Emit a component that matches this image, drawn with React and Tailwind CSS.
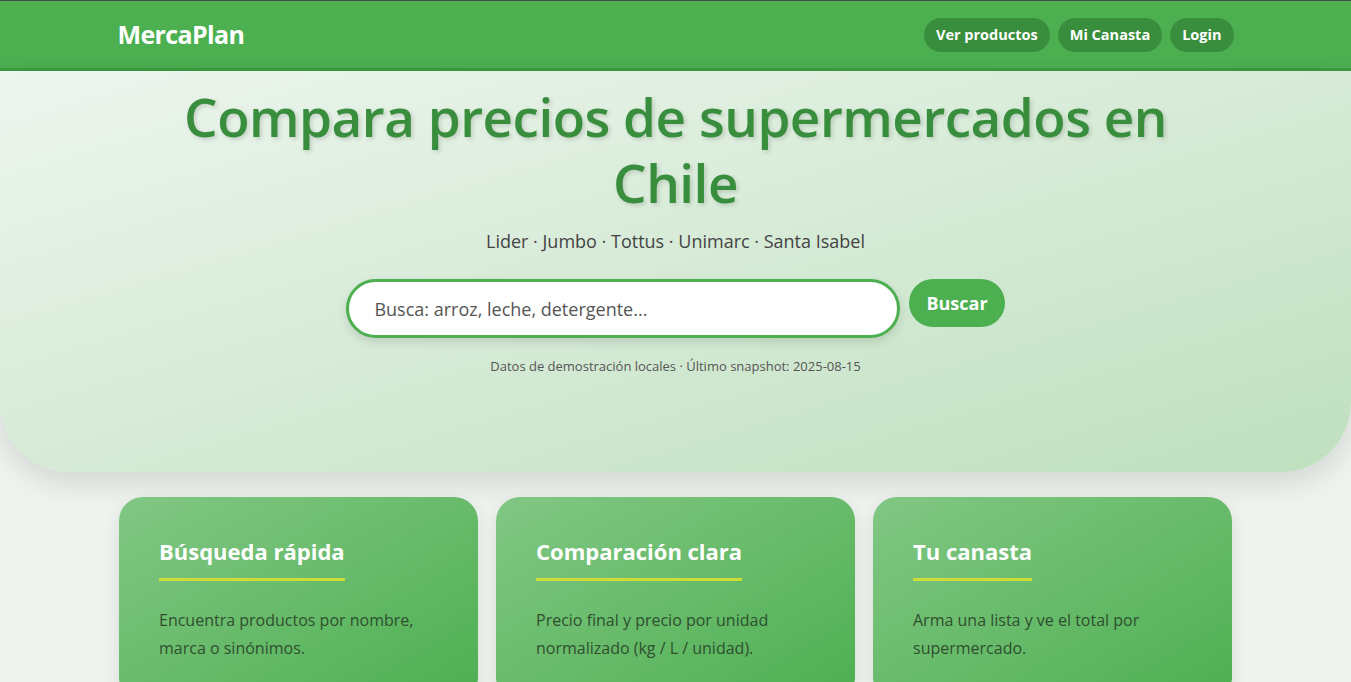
import { useState } from "react";

/* Tarjetas de características */
const features = [
  { title: "Búsqueda rápida", text: "Encuentra productos por nombre, marca o sinónimos." },
  { title: "Comparación clara", text: "Precio final y precio por unidad normalizado (kg / L / unidad)." },
  { title: "Tu canasta", text: "Arma una lista y ve el total por supermercado." },
];

function NavButton({ children }) {
  return (
    <a href="#" className="rounded-full bg-[#388e3c] px-3 h-[34px] flex items-center text-[14.5px] font-bold text-white">
      {children}
    </a>
  );
}

export default function App() {
  const [query, setQuery] = useState("");

  return (
    <div className="min-h-screen bg-[#eef3ef] font-['Open_Sans','Noto_Sans',sans-serif] border-t border-[#4a4a4a]">
      {/* Navbar */}
      <header className="bg-[#4caf50] border-b-[3px] border-[#3d9a41] shadow-sm">
        <div className="mx-auto w-[1116px] h-[67px] flex items-center justify-between">
          <span className="text-[25px] font-bold text-white tracking-tight">MercaPlan</span>
          <nav className="flex items-center gap-2">
            <NavButton>Ver productos</NavButton>
            <NavButton>Mi Canasta</NavButton>
            <NavButton>Login</NavButton>
          </nav>
        </div>
      </header>

      {/* Hero */}
      <section className="bg-linear-to-br from-[#edf5ee] to-[#bfe0bf] rounded-b-[70px] shadow-[0_10px_30px_rgba(0,0,0,0.12)] pt-[13px] pb-[95px] text-center">
        <h1 className="mx-auto max-w-[1040px] text-[53px] leading-[66px] tracking-[-0.5px] font-semibold text-[#388e3c] [text-shadow:2px_2px_4px_rgba(0,0,0,0.15)]">
          Compara precios de supermercados en Chile
        </h1>
        <p className="mt-[12px] text-[18px] text-[#444]">Lider · Jumbo · Tottus · Unimarc · Santa Isabel</p>

        <form className="mt-[24px] flex justify-center items-start gap-[9px]" onSubmit={(e) => e.preventDefault()}>
          <input
            value={query}
            onChange={(e) => setQuery(e.target.value)}
            placeholder="Busca: arroz, leche, detergente..."
            className="w-[554px] h-[59px] rounded-full border-[3px] border-[#4caf50] bg-white px-[25px] text-[18px] text-[#333] placeholder:text-[#555] outline-none shadow-[0_4px_10px_rgba(0,0,0,0.12)]"
          />
          <button className="h-[48px] rounded-full bg-[#4caf50] px-[17px] text-[18px] font-bold text-white">
            Buscar
          </button>
        </form>

        <p className="mt-[19px] text-[13px] text-[#555]">
          Datos de demostración locales · Último snapshot: 2025-08-15
        </p>
      </section>

      {/* Tarjetas */}
      <div className="mx-auto w-[1113px] grid grid-cols-3 gap-[18px] mt-[25px] pb-10">
        {features.map((f) => (
          <div
            key={f.title}
            className="rounded-[24px] bg-linear-to-br from-[#81c784] to-[#4caf50] px-10 pt-[38px] pb-10 shadow-[0_6px_16px_rgba(0,0,0,0.1)]"
          >
            <h3 className="inline-block border-b-[3px] border-[#cddc39] pb-[10px] text-[22px] font-bold text-white">
              {f.title}
            </h3>
            <p className="mt-[25px] text-[16px] leading-[28px] text-[#2f4f2f]">{f.text}</p>
          </div>
        ))}
      </div>
    </div>
  );
}
